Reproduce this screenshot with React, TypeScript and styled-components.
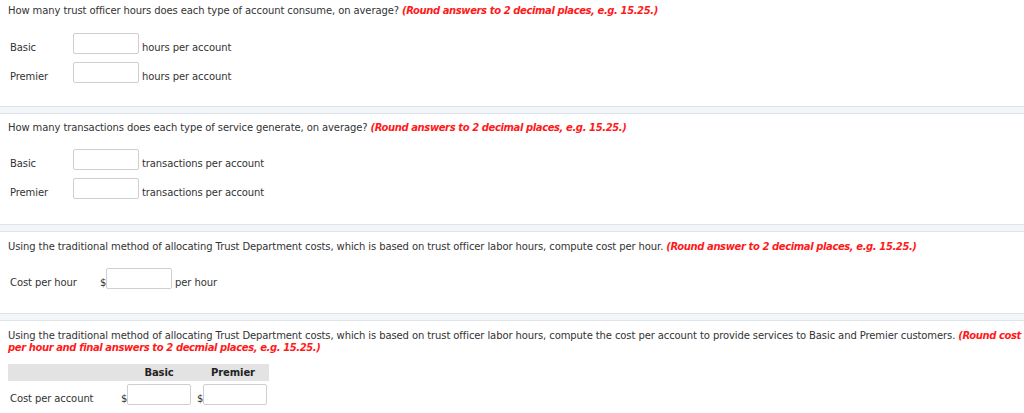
import React from 'react'
import styled, { createGlobalStyle } from 'styled-components'

const GlobalStyle = createGlobalStyle`
    html, body {
        margin: 0;
        padding: 0;
        background: #fff;
    }
    body {
        font-family: "DejaVu Sans", Verdana, sans-serif;
        font-size: 10px;
        letter-spacing: -0.1px;
        color: #333;
    }
`

const Page = styled.div`
    width: 1024px;
    display: flex;
    flex-direction: column;
`

const Section = styled.section<{ $top: number; $bottom: number }>`
    padding: ${p => p.$top}px 2px ${p => p.$bottom}px 8px;
`

const Separator = styled.div`
    height: 6px;
    background: #f3f6f9;
    border-top: 1px solid #dde3ea;
    border-bottom: 1px solid #dde3ea;
`

const Question = styled.p<{ $gap?: number }>`
    margin: 0 0 ${p => p.$gap ?? 15}px;
    line-height: 12px;
`

const Hint = styled.em`
    color: #ff1a1a;
    font-weight: bold;
    letter-spacing: -0.4px;
`

const Rows = styled.div`
    display: flex;
    flex-direction: column;
    gap: 8px;
`

const Row = styled.div<{ $label: number }>`
    display: grid;
    grid-template-columns: ${p => p.$label}px auto auto 1fr;
    align-items: end;
`

const Label = styled.span`
    padding-left: 2px;
    line-height: 12px;
`

const Dollar = styled.span`
    line-height: 12px;
    width: 6px;
`

const Field = styled.input<{ $w?: number }>`
    box-sizing: border-box;
    width: ${p => p.$w ?? 66}px;
    height: 21px;
    margin: 0;
    border: 1px solid #cfcfcf;
    border-radius: 2px;
    background: #fff;
    font: inherit;
    padding: 0 3px;
`

const Unit = styled.span`
    padding-left: 3px;
    line-height: 12px;
`

const Table = styled.div`
    width: 261px;
    display: grid;
    grid-template-columns: 113px 76px 72px;
    row-gap: 3px;
`

const HeadCell = styled.div`
    background: #e3e3e3;
    height: 17px;
    line-height: 17px;
    font-weight: bold;
    text-align: center;
    color: #222;
`

const Cell = styled.div`
    display: flex;
    align-items: flex-end;
`

const Entry = ({ label, unit, width }: { label: string; unit: string; width: number }) => (
    <Row $label={width}>
        <Label>{label}</Label>
        <Field />
        <Unit>{unit}</Unit>
    </Row>
)

const App = () => {
    return (
        <Page>
            <GlobalStyle />
            <Section $top={5} $bottom={23}>
                <Question $gap={16}>
                    How many trust officer hours does each type of account consume, on average? <Hint>(Round answers to 2 decimal places, e.g. 15.25.)</Hint>
                </Question>
                <Rows>
                    <Entry label="Basic" unit="hours per account" width={65} />
                    <Entry label="Premier" unit="hours per account" width={65} />
                </Rows>
            </Section>
            <Separator />
            <Section $top={8} $bottom={25}>
                <Question>
                    How many transactions does each type of service generate, on average? <Hint>(Round answers to 2 decimal places, e.g. 15.25.)</Hint>
                </Question>
                <Rows>
                    <Entry label="Basic" unit="transactions per account" width={65} />
                    <Entry label="Premier" unit="transactions per account" width={65} />
                </Rows>
            </Section>
            <Separator />
            <Section $top={9} $bottom={24}>
                <Question>
                    Using the traditional method of allocating Trust Department costs, which is based on trust officer labor hours, compute cost per hour. <Hint>(Round answer to 2 decimal places, e.g. 15.25.)</Hint>
                </Question>
                <Row $label={92}>
                    <Label>Cost per hour</Label>
                    <Cell>
                        <Dollar>$</Dollar>
                        <Field />
                    </Cell>
                    <Unit>per hour</Unit>
                </Row>
            </Section>
            <Separator />
            <Section $top={9} $bottom={8}>
                <Question $gap={10}>
                    Using the traditional method of allocating Trust Department costs, which is based on trust officer labor hours, compute the cost per account to provide services to Basic and Premier customers. <Hint>(Round cost per hour and final answers to 2 decmial places, e.g. 15.25.)</Hint>
                </Question>
                <Table>
                    <HeadCell />
                    <HeadCell>Basic</HeadCell>
                    <HeadCell>Premier</HeadCell>
                    <Cell><Label>Cost per account</Label></Cell>
                    <Cell><Dollar>$</Dollar><Field $w={64} /></Cell>
                    <Cell><Dollar>$</Dollar><Field $w={64} /></Cell>
                </Table>
            </Section>
        </Page>
    )
}

export default App
